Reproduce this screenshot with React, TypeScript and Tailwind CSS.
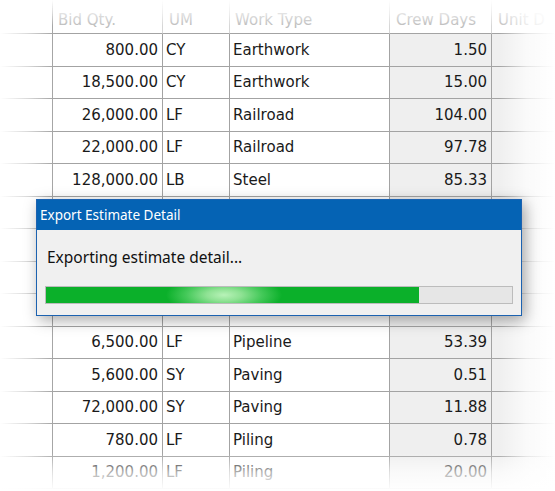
import React from "react";

const rows: [string, string, string, string][] = [
  ["800.00", "CY", "Earthwork", "1.50"],
  ["18,500.00", "CY", "Earthwork", "15.00"],
  ["26,000.00", "LF", "Railroad", "104.00"],
  ["22,000.00", "LF", "Railroad", "97.78"],
  ["128,000.00", "LB", "Steel", "85.33"],
  ["", "", "", ""],
  ["", "", "", ""],
  ["", "", "", ""],
  ["", "", "", ""],
  ["6,500.00", "LF", "Pipeline", "53.39"],
  ["5,600.00", "SY", "Paving", "0.51"],
  ["72,000.00", "SY", "Paving", "11.88"],
  ["780.00", "LF", "Piling", "0.78"],
  ["1,200.00", "LF", "Piling", "20.00"],
];

const cell = "flex items-center border-r border-b border-[#a3a3a3] whitespace-nowrap overflow-hidden";

export default function App() {
  return (
    <div className="relative w-[555px] h-[491px] overflow-hidden bg-white text-[15px] text-[#1a1a1a] [font-family:'DejaVu_Sans',Verdana,sans-serif]">
      {/* header */}
      <div className="flex h-[34px] text-[#bdbdbd]">
        <div className="w-[53px] border-r border-b border-[#a3a3a3]" />
        <div className="w-[110px] flex items-center pt-[7px] pl-[5px] border-r border-[#d6d6d6] border-b border-b-[#a3a3a3]">Bid Qty.</div>
        <div className="w-[67px] flex items-center pt-[7px] pl-[6px] border-r border-[#d6d6d6] border-b border-b-[#a3a3a3]">UM</div>
        <div className="w-[160px] flex items-center pt-[7px] pl-[5px] border-r border-[#d6d6d6] border-b border-b-[#a3a3a3]">Work Type</div>
        <div className="w-[102px] flex items-center pt-[7px] pl-[6px] border-r border-[#d6d6d6] border-b border-b-[#a3a3a3]">Crew Days</div>
        <div className="w-[63px] flex items-center pt-[7px] pl-[6px] whitespace-nowrap overflow-hidden border-b border-[#a3a3a3]">Unit D</div>
      </div>
      {rows.map((r, i) => (
        <div key={i} className="flex h-[32.5px]">
          <div className={`${cell} w-[53px]`} />
          <div className={`${cell} w-[110px] justify-end pr-[4px]`}>{r[0]}</div>
          <div className={`${cell} w-[67px] pl-[3px]`}>{r[1]}</div>
          <div className={`${cell} w-[160px] pl-[3px]`}>{r[2]}</div>
          <div className={`${cell} w-[102px] justify-end pr-[4px] bg-[#efefef]`}>{r[3]}</div>
          <div className={`${cell} flex-1 bg-[#efefef]`} />
        </div>
      ))}

      {/* edge fades */}
      <div className="pointer-events-none absolute left-0 right-0 top-0 h-[26px] bg-gradient-to-b from-white via-white/60 to-white/0" />
      <div className="pointer-events-none absolute left-0 top-0 bottom-0 w-[54px] bg-gradient-to-r from-white via-white/60 to-white/0" />
      <div className="pointer-events-none absolute right-0 top-0 bottom-0 w-[56px] bg-gradient-to-l from-white via-white/70 to-white/0" />
      <div className="pointer-events-none absolute left-0 right-0 bottom-0 h-[38px] bg-gradient-to-t from-white via-white/65 to-white/0" />

      {/* dialog */}
      <div className="absolute left-[36px] top-[199px] w-[486px] h-[117px] flex flex-col border border-[#1c62b0] bg-[#f0f0f0] shadow-[3px_4px_14px_rgba(0,0,0,0.35)] [font-family:'Noto_Sans','Open_Sans',sans-serif]">
        <div className="h-[30px] bg-[#0563b4] text-white text-[13.5px] flex items-center pl-[3px]">Export Estimate Detail</div>
        <div className="flex-1 flex flex-col px-[8px]">
          <div className="h-[56px] flex items-center pl-[2px] text-[15.5px] text-[#111]">Exporting estimate detail...</div>
          <div className="h-[18px] border border-[#bcbcbc] bg-[#e6e6e6]">
            <div className="h-full w-[80%] bg-[radial-gradient(ellipse_58px_20px_at_178px_50%,#b8f2b8_0%,#8fe294_30%,#45c95a_65%,#0bb02a_100%)]" />
          </div>
        </div>
      </div>
    </div>
  );
}
